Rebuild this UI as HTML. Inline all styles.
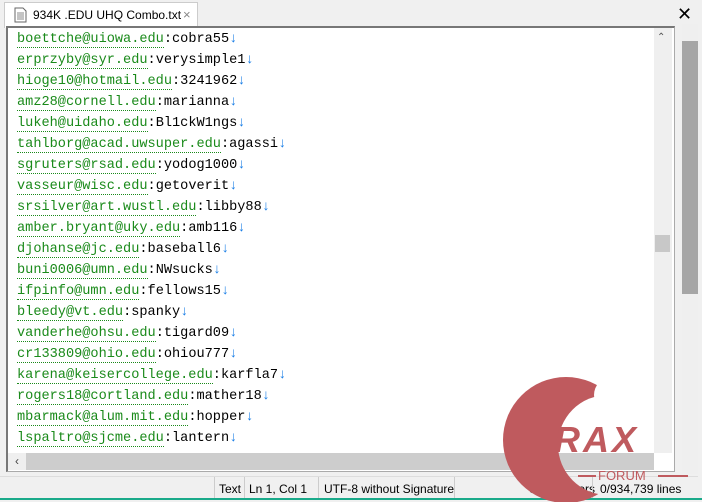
<!DOCTYPE html>
<html><head><style>
body{margin:0;width:702px;height:502px;background:#f0f0f0;position:relative;overflow:hidden;font-family:"Liberation Sans",sans-serif}
.tab{position:absolute;left:4px;top:2px;width:192px;height:25px;background:#fff;border:1px solid #ccc;border-bottom:none;font-size:12px;color:#000}
.frame{position:absolute;left:6px;top:26px;width:666px;height:443px;background:#fff;border:1px solid #aaa;border-left:2px solid #777;border-top:2px solid #777}
.l{position:absolute;left:9px;font-family:"Liberation Mono",monospace;font-size:13.6px;white-space:pre;color:#000}
.g{color:#1a8a1a;border-bottom:1px dotted #1a8a1a}
.a{color:#1a7ee6}
.vs{position:absolute;left:646px;top:0;width:18px;height:425px;background:#efefef}
.hs{position:absolute;left:0;top:425px;width:646px;height:17px;background:#cdcdcd}
.status{position:absolute;left:0;top:476px;width:698px;height:22px;border-top:1px solid #ddd;font-size:12px}
.status span{position:absolute;top:5px}
.sep{position:absolute;top:0;width:1px;height:22px;background:#ccc}
</style></head><body>
<div class="tab"><svg style="position:absolute;left:9px;top:4px" width="13" height="16"><path d="M1 1h8l3 3v11H1z" fill="#fff" stroke="#666"/><path d="M3 6h7M3 8h7M3 10h7M3 12h7" stroke="#888"/></svg><span style="position:absolute;left:28px;top:5px">934K .EDU UHQ Combo.txt</span><span style="position:absolute;left:178px;top:4px;color:#888;font-size:13px">×</span></div>
<div style="position:absolute;left:677px;top:4px;font-size:18px">✕</div>
<div class="frame">
<div class="l" style="top:4px"><span class="g">boettche@uiowa.edu</span>:cobra55<span class="a">↓</span></div>
<div class="l" style="top:25px"><span class="g">erprzyby@syr.edu</span>:verysimple1<span class="a">↓</span></div>
<div class="l" style="top:46px"><span class="g">hioge10@hotmail.edu</span>:3241962<span class="a">↓</span></div>
<div class="l" style="top:67px"><span class="g">amz28@cornell.edu</span>:marianna<span class="a">↓</span></div>
<div class="l" style="top:88px"><span class="g">lukeh@uidaho.edu</span>:Bl1ckW1ngs<span class="a">↓</span></div>
<div class="l" style="top:109px"><span class="g">tahlborg@acad.uwsuper.edu</span>:agassi<span class="a">↓</span></div>
<div class="l" style="top:130px"><span class="g">sgruters@rsad.edu</span>:yodog1000<span class="a">↓</span></div>
<div class="l" style="top:151px"><span class="g">vasseur@wisc.edu</span>:getoverit<span class="a">↓</span></div>
<div class="l" style="top:172px"><span class="g">srsilver@art.wustl.edu</span>:libby88<span class="a">↓</span></div>
<div class="l" style="top:193px"><span class="g">amber.bryant@uky.edu</span>:amb116<span class="a">↓</span></div>
<div class="l" style="top:214px"><span class="g">djohanse@jc.edu</span>:baseball6<span class="a">↓</span></div>
<div class="l" style="top:235px"><span class="g">buni0006@umn.edu</span>:NWsucks<span class="a">↓</span></div>
<div class="l" style="top:256px"><span class="g">ifpinfo@umn.edu</span>:fellows15<span class="a">↓</span></div>
<div class="l" style="top:277px"><span class="g">bleedy@vt.edu</span>:spanky<span class="a">↓</span></div>
<div class="l" style="top:298px"><span class="g">vanderhe@ohsu.edu</span>:tigard09<span class="a">↓</span></div>
<div class="l" style="top:319px"><span class="g">cr133809@ohio.edu</span>:ohiou777<span class="a">↓</span></div>
<div class="l" style="top:340px"><span class="g">karena@keisercollege.edu</span>:karfla7<span class="a">↓</span></div>
<div class="l" style="top:361px"><span class="g">rogers18@cortland.edu</span>:mather18<span class="a">↓</span></div>
<div class="l" style="top:382px"><span class="g">mbarmack@alum.mit.edu</span>:hopper<span class="a">↓</span></div>
<div class="l" style="top:403px"><span class="g">lspaltro@sjcme.edu</span>:lantern<span class="a">↓</span></div>
<div class="vs"><div style="position:absolute;left:1px;top:207px;width:15px;height:17px;background:#c8c8c8"></div><div style="position:absolute;left:3px;top:4px;font-size:10px;color:#555">⌃</div></div>
<div class="hs"><div style="position:absolute;left:0;top:0;width:18px;height:17px;background:#efefef;font-size:12px;text-align:center;color:#444;line-height:17px">‹</div></div>
</div>
<div style="position:absolute;left:682px;top:24px;width:16px;height:450px;background:#efefef"><div style="position:absolute;left:0;top:17px;width:16px;height:253px;background:#a6a6a6"></div></div>
<div class="status">
<div class="sep" style="left:214px"></div><span style="left:219px">Text</span>
<div class="sep" style="left:244px"></div><span style="left:249px">Ln 1, Col 1</span>
<div class="sep" style="left:318px"></div><span style="left:324px">UTF-8 without Signature</span>
<div class="sep" style="left:454px"></div>
<span style="left:529px">0 characters</span><div class="sep" style="left:592px"></div><span style="left:600px">0/934,739 lines</span>
</div>
<div style="position:absolute;left:0;top:498px;width:702px;height:2px;background:#1aaa8a"></div>
<svg style="position:absolute;left:0;top:0" width="702" height="502">
<defs><mask id="m"><rect width="702" height="502" fill="#fff"/><circle cx="608" cy="445" r="50" fill="#000"/><circle cx="612" cy="395" r="18" fill="#000"/></mask></defs>
<circle cx="566" cy="440" r="63" fill="#bf5a5e" mask="url(#m)"/>
<text x="554" y="452" font-family="Liberation Sans" font-weight="bold" font-style="italic" font-size="36" fill="#bf5a5e" letter-spacing="3">RAX</text>
<path d="M578 476h18M658 476h30" stroke="#bf5a5e" stroke-width="2"/>
<text x="598" y="480" font-family="Liberation Sans" font-size="13" fill="#bf5a5e">FORUM</text>
</svg>
</body></html>
